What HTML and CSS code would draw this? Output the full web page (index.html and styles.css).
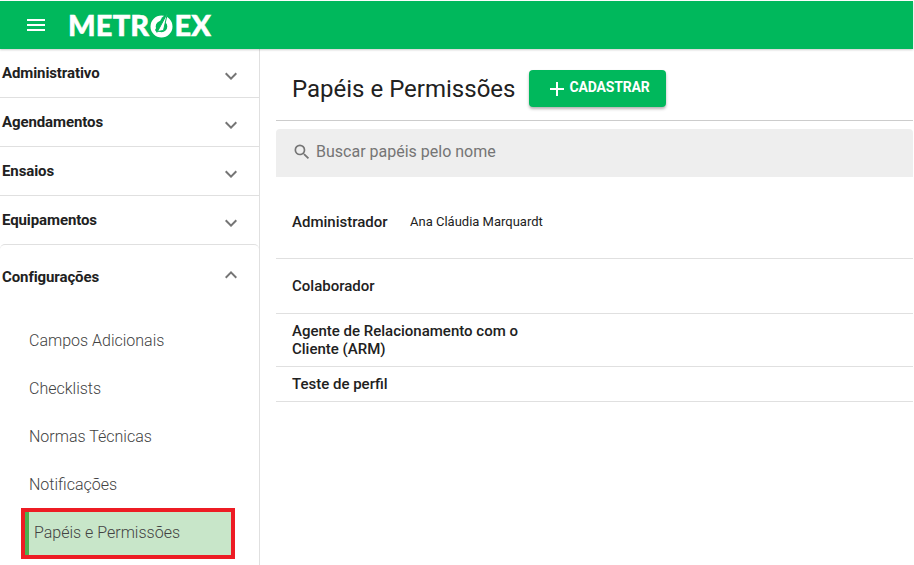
FILE: index.html
```html
<!DOCTYPE html>
<html lang="pt-BR">
<head>
<meta charset="utf-8">
<title>Papéis e Permissões</title>
<link rel="stylesheet" href="styles.css">
</head>
<body>
<header class="topbar">
  <svg class="menu-icon" viewBox="0 0 24 24" width="24" height="24"><path d="M3 18h18v-2H3v2zm0-5h18v-2H3v2zm0-7v2h18V6H3z" fill="#fff"/></svg>
  <div class="logo"><span>METR</span><svg class="logo-o" viewBox="0 0 25 27" width="25" height="27"><circle cx="12.5" cy="15.5" r="8.4" fill="none" stroke="#fff" stroke-width="5.2"/><path d="M8 22 18.5 2 13 6.5 6 19z" fill="#00b85c"/><path d="M8.5 20.5 18.5 2 14.5 19.5z" fill="#fff" stroke="#00b85c" stroke-width="1"/></svg><span>EX</span></div>
</header>
<div class="shell">
  <nav class="sidebar">
    <div class="group"><span>Administrativo</span><svg class="chev" viewBox="0 0 24 24" width="24" height="24"><path d="M16.59 8.59 12 13.17 7.41 8.59 6 10l6 6 6-6z"/></svg></div>
    <div class="group"><span>Agendamentos</span><svg class="chev" viewBox="0 0 24 24" width="24" height="24"><path d="M16.59 8.59 12 13.17 7.41 8.59 6 10l6 6 6-6z"/></svg></div>
    <div class="group"><span>Ensaios</span><svg class="chev" viewBox="0 0 24 24" width="24" height="24"><path d="M16.59 8.59 12 13.17 7.41 8.59 6 10l6 6 6-6z"/></svg></div>
    <div class="group group-last"><span>Equipamentos</span><svg class="chev" viewBox="0 0 24 24" width="24" height="24"><path d="M16.59 8.59 12 13.17 7.41 8.59 6 10l6 6 6-6z"/></svg></div>
    <div class="panel">
      <div class="panel-head"><span>Configurações</span><svg class="chev" viewBox="0 0 24 24" width="24" height="24"><path d="M12 8l-6 6 1.41 1.41L12 10.83l4.59 4.58L18 14z"/></svg></div>
      <ul class="sublist">
        <li>Campos Adicionais</li>
        <li>Checklists</li>
        <li>Normas Técnicas</li>
        <li>Notificações</li>
        <li class="active"><span>Papéis e Permissões</span></li>
      </ul>
    </div>
  </nav>
  <main class="content">
    <div class="title-row">
      <h1>Papéis e Permissões</h1>
      <button class="btn"><svg viewBox="0 0 24 24" width="24" height="24"><path d="M19 13h-6v6h-2v-6H5v-2h6V5h2v6h6v2z" fill="#fff"/></svg><span>CADASTRAR</span></button>
    </div>
    <div class="search">
      <svg viewBox="0 0 24 24" width="20" height="20"><path d="M15.5 14h-.79l-.28-.27A6.47 6.47 0 0 0 16 9.5 6.5 6.5 0 1 0 9.5 16c1.61 0 3.09-.59 4.23-1.57l.27.28v.79l5 4.99L20.49 19l-4.99-5zm-6 0C7.01 14 5 11.99 5 9.5S7.01 5 9.5 5 14 7.01 14 9.5 11.99 14 9.5 14z" fill="#757575"/></svg>
      <span>Buscar papéis pelo nome</span>
    </div>
    <div class="role role-admin"><div class="role-name">Administrador</div><div class="role-user">Ana Cláudia Marquardt</div></div>
    <div class="role role-colab"><div class="role-name">Colaborador</div></div>
    <div class="role role-arm"><div class="role-name">Agente de Relacionamento com o Cliente (ARM)</div></div>
    <div class="role role-test"><div class="role-name">Teste de perfil</div></div>
  </main>
</div>
</body>
</html>
```
FILE: styles.css
```css
* { box-sizing: border-box; }
html, body { margin: 0; height: 100%; }
body {
  height: 565px;
  overflow: hidden;
  background: #fff;
  font-family: Roboto, "Liberation Sans", sans-serif;
  color: #212121;
}
.topbar {
  height: 48px;
  margin: 1px 1px 0 0;
  background: #00b85c;
  display: flex;
  align-items: center;
  padding-left: 24px;
  box-shadow: 0 1px 2px rgba(0,0,0,.2);
  position: relative;
}
.menu-icon { flex: none; }
.logo {
  margin-left: 20px;
  display: flex;
  align-items: center;
  font-family: Lato, Roboto, sans-serif;
  font-weight: 900;
  font-size: 29px;
  line-height: 30px;
  letter-spacing: .2px;
  color: #fff;
  -webkit-text-stroke: .5px #fff;
}
.logo-o { margin: -2px 0 0 0; }
.shell { display: flex; height: 516px; }
.sidebar {
  width: 260px;
  flex: none;
  border-right: 1px solid #e0e0e0;
}
.group {
  height: 49px;
  border-bottom: 1px solid #e0e0e0;
  display: flex;
  align-items: center;
  justify-content: space-between;
  padding: 0 16px 0 2px;
  font-size: 15px;
  font-weight: 700;
  letter-spacing: -.1px;
  color: #212121;
}
.group-last { height: 48px; border-bottom: 0; }
.group span { margin-top: -1px; }
.chev { fill: #757575; flex: none; margin-top: 5px; }
.panel {
  border-top: 1px solid #e0e0e0;
  border-radius: 5px 5px 0 0;
}
.panel-head {
  height: 64px;
  display: flex;
  align-items: center;
  justify-content: space-between;
  padding: 0 16px 0 2px;
  font-size: 15px;
  font-weight: 700;
  letter-spacing: -.1px;
}
.panel-head .chev { margin-top: -5px; }
.sublist { list-style: none; margin: 7px 0 0; padding: 0 0 0 21px; }
.sublist li {
  height: 48px;
  display: flex;
  align-items: center;
  padding-left: 8px;
  font-size: 16px;
  font-weight: 300;
  color: #424242;
  width: 214px;
}
.sublist li.active {
  height: 51px;
  padding-left: 0;
  border: 4px solid #ed1c24;
  background: #c8e6c9;
}
.active span {
  display: flex;
  align-items: center;
  height: 100%;
  border-left: 4px solid #4caf50;
  padding: 0 0 2px 5px;
}
.content { flex: 1; padding: 0 1px 0 16px; min-width: 0; }
.title-row {
  height: 72px;
  display: flex;
  align-items: center;
  border-bottom: 1px solid #ccc;
  padding: 6px 0 0 16px;
}
h1 { margin: 2px 0 0; font-size: 24px; font-weight: 400; color: #212121; }
.btn {
  margin: 2px 0 0 14px;
  width: 137px;
  height: 37px;
  border: 0;
  border-radius: 4px;
  background: #00b85c;
  color: #fff;
  font-family: inherit;
  font-size: 14px;
  font-weight: 700;
  display: flex;
  align-items: center;
  padding: 0 0 0 16px;
  box-shadow: 0 2px 3px rgba(0,0,0,.3);
}
.btn svg { margin-top: 1px; }
.btn span { margin: -3px 0 0 0; letter-spacing: -.15px; }
.search {
  margin-top: 8px;
  height: 48px;
  background: #eee;
  border-radius: 4px 4px 0 0;
  display: flex;
  align-items: center;
  padding: 0 0 3px 16px;
  gap: 4px;
  font-size: 16px;
  color: #757575;
}
.role {
  display: flex;
  padding-left: 16px;
  border-bottom: 1px solid #e0e0e0;
  font-size: 15px;
  font-weight: 500;
  color: #212121;
}
.role-name { width: 118px; flex: none; }
.role-admin { height: 82px; padding-top: 36px; }
.role-colab { height: 55px; align-items: center; }
.role-arm { height: 53px; align-items: center; }
.role-arm .role-name { width: 240px; line-height: 18px; }
.role-test { height: 35px; align-items: center; }
.role-test .role-name { margin-top: -1px; }
.role-colab .role-name { margin-top: 0; }
.role-user { font-size: 13px; font-weight: 400; line-height: 18px; }
```
